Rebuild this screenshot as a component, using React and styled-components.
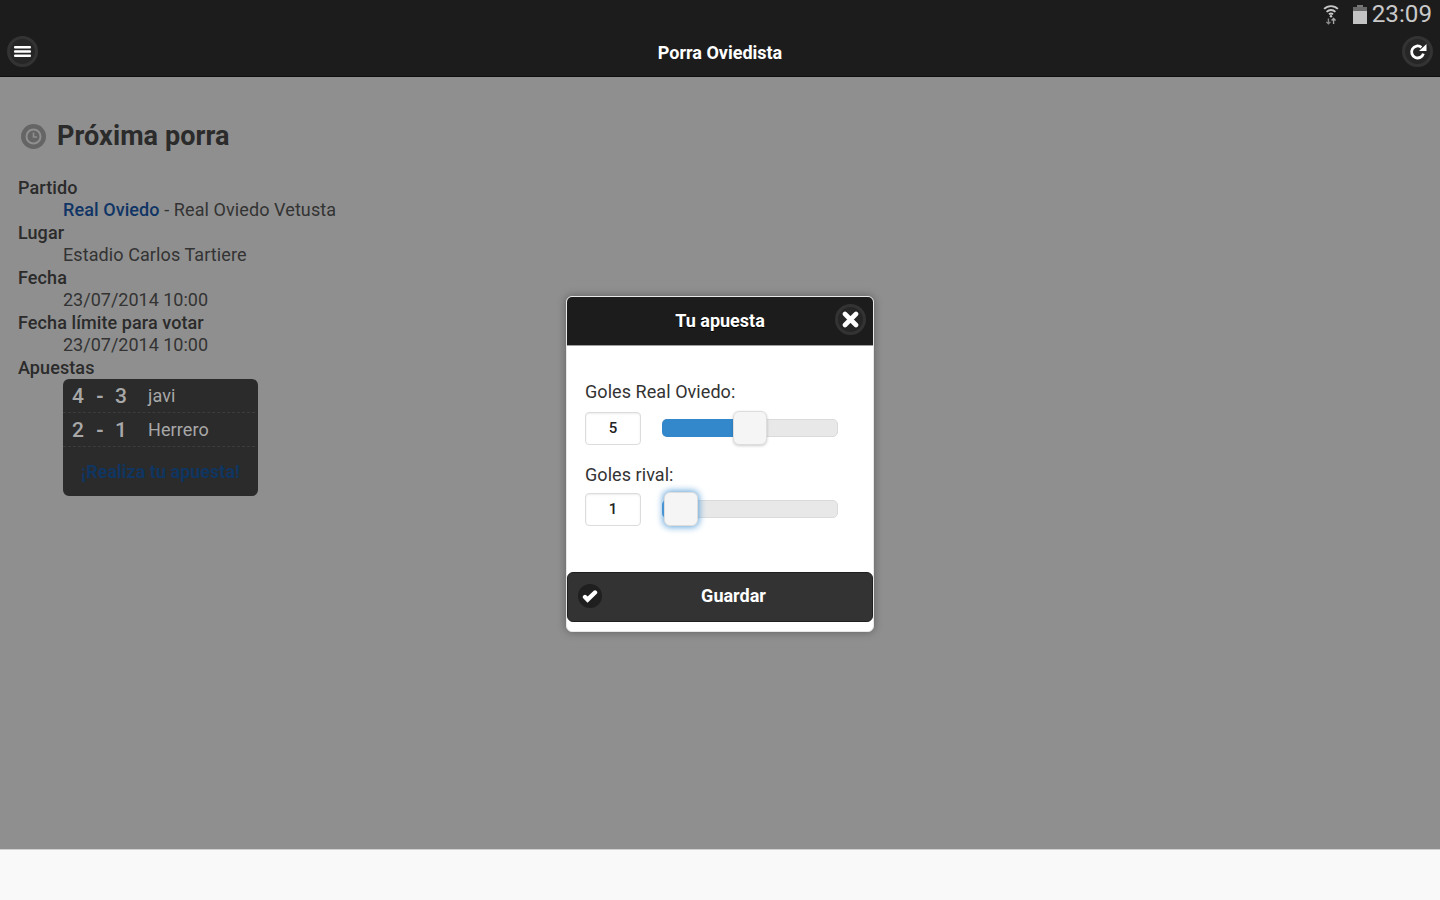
import React from 'react';
import styled, { createGlobalStyle } from 'styled-components';

const GlobalStyle = createGlobalStyle`
    html, body {
        margin: 0;
        padding: 0;
        height: 100%;
        overflow: hidden;
        background: #f9f9f9;
        font-family: Roboto, "Liberation Sans", sans-serif;
    }
`;

const Page = styled.div`
    position: relative;
    width: 1440px;
    height: 900px;
    display: flex;
    flex-direction: column;
`;

const Header = styled.header`
    height: 77px;
    box-sizing: border-box;
    background: #1c1c1c;
    border-bottom: 1px solid #0e0e0e;
    display: flex;
    flex-direction: column;
`;

const StatusBar = styled.div`
    height: 28px;
    flex: none;
    display: flex;
    align-items: center;
    justify-content: flex-end;
    padding-right: 8px;
    color: #c9c9c9;
    font-size: 24.2px;
    line-height: 28px;
`;

const WifiSlot = styled.span`
    display: flex;
    margin-right: 13px;
`;

const BatterySlot = styled.span`
    display: flex;
    margin-right: 5px;
`;

const Toolbar = styled.div`
    flex: 1;
    display: flex;
    align-items: flex-start;
    justify-content: space-between;
    padding: 8px 7px 0;
`;

const ToolbarTitle = styled.h1`
    margin: 1px 0 0;
    font-size: 18px;
    line-height: 32px;
    font-weight: 700;
    color: #fff;
`;

const RoundButton = styled.div`
    width: 31px;
    height: 31px;
    box-sizing: border-box;
    border-radius: 50%;
    border: 3px solid #333;
    background: #262626;
    display: flex;
    align-items: center;
    justify-content: center;
`;

const Content = styled.main`
    flex: 1;
    background: #8f8f8f;
    padding: 42px 18px 0;
    color: #333;
`;

const PageTitle = styled.h2`
    display: flex;
    align-items: center;
    gap: 11px;
    margin: 0 0 23.5px;
    padding-left: 3px;
    height: 34px;
    font-size: 27px;
    font-weight: 700;
    letter-spacing: 0.08px;
    color: #2b2b2b;
`;

const ClockBadge = styled.span`
    width: 25px;
    height: 25px;
    margin-top: 1px;
    border-radius: 50%;
    background: #656565;
    display: flex;
    align-items: center;
    justify-content: center;
`;

const Details = styled.dl`
    margin: 0;
    font-size: 18px;
    line-height: 22.5px;
`;

const Term = styled.dt`
    font-weight: 500;
    letter-spacing: 0.09px;
    color: #2b2b2b;
`;

const Value = styled.dd`
    margin: 0 0 0 45px;
    letter-spacing: ${props => (props.$numeric ? 0 : 0.09)}px;
    color: #333;
`;

const Team = styled.span`
    font-weight: 500;
    color: #0f3566;
`;

const BetsCard = styled.div`
    width: 195px;
    height: 117px;
    margin-left: 45px;
    box-sizing: border-box;
    background: #2b2b2b;
    border-radius: 6px;
    display: flex;
    flex-direction: column;
`;

const BetRow = styled.div`
    height: 34px;
    flex: none;
    box-sizing: border-box;
    margin-right: 3px;
    border-bottom: 1px dashed #3c3c3c;
    display: grid;
    grid-template-columns: 24px 19px 33px 1fr;
    align-items: center;
    padding-left: 9px;
    color: #a8a8a8;
`;

const Score = styled.span`
    font-size: 21px;
    font-weight: 500;
`;

const Dash = styled.span`
    font-size: 20px;
    font-weight: 700;
`;

const BetName = styled.span`
    font-size: 18px;
    letter-spacing: 0.09px;
`;

const BetLink = styled.a`
    flex: 1;
    display: flex;
    align-items: center;
    justify-content: center;
    font-size: 18px;
    font-weight: 700;
    color: #0f3560;
`;

const Footer = styled.footer`
    height: 51px;
    box-sizing: border-box;
    background: #f9f9f9;
    border-top: 1px solid #d0d0d0;
`;

const Popup = styled.section`
    position: absolute;
    top: 296px;
    left: 50%;
    margin-left: -154px;
    width: 308px;
    height: 336px;
    box-sizing: border-box;
    display: flex;
    flex-direction: column;
    background: #fff;
    border: 1px solid #e8e8e8;
    border-radius: 6px;
    box-shadow: 0 0 8px rgba(0, 0, 0, 0.35);
    overflow: hidden;
`;

const PopupHeader = styled.div`
    height: 49px;
    flex: none;
    box-sizing: border-box;
    padding-bottom: 2px;
    background: #1c1c1c;
    border-bottom: 1px solid #a0a0a0;
    display: flex;
    align-items: center;
    justify-content: center;
    position: relative;
`;

const PopupTitle = styled.h3`
    margin: 0;
    font-size: 18px;
    font-weight: 700;
    color: #fff;
    text-shadow: 0 1px 0 #000;
`;

const CloseSlot = styled.div`
    position: absolute;
    right: 7px;
    top: 7px;
`;

const PopupBody = styled.div`
    flex: 1;
    padding: 35px 18px 0;
    display: flex;
    flex-direction: column;
`;

const FieldLabel = styled.label`
    display: block;
    font-size: 18px;
    line-height: 22px;
    letter-spacing: 0.06px;
    color: #333;
    margin-bottom: ${props => props.$gap}px;
`;

const Field = styled.div`
    margin-bottom: ${props => props.$gap}px;
`;

const FieldRow = styled.div`
    display: flex;
    align-items: center;
    gap: 21px;
    height: 34px;
`;

const ValueBox = styled.div`
    width: 56px;
    height: 33px;
    box-sizing: border-box;
    border: 1px solid #dcdcdc;
    border-radius: 4px;
    box-shadow: inset 0 1px 2px rgba(0, 0, 0, 0.08);
    display: flex;
    align-items: center;
    justify-content: center;
    font-size: 15px;
    font-weight: 500;
    color: #222;
`;

const Track = styled.div`
    position: relative;
    width: 176px;
    height: 18px;
    box-sizing: border-box;
    background: #e8e8e8;
    border: 1px solid #dadada;
    border-radius: 5px;
`;

const TrackFill = styled.div`
    margin: -1px;
    height: 18px;
    background: #3388cc;
    border-radius: 5px 0 0 5px;
`;

const Thumb = styled.div`
    position: absolute;
    top: -9px;
    width: 34px;
    height: 34px;
    box-sizing: border-box;
    margin-left: -1px;
    background: #f5f5f5;
    border: 1px solid #dddddd;
    border-radius: 6px;
    box-shadow: ${props => (props.$focused
        ? '0 0 7px 1px #5a9fd8'
        : '0 1px 3px rgba(0, 0, 0, 0.2)')};
`;

const SaveButton = styled.button`
    position: relative;
    flex: none;
    height: 50px;
    margin: 0 0 9px;
    width: 306px;
    border: 1px solid #1f1f1f;
    border-radius: 6px;
    background: #333;
    color: #fff;
    font-family: inherit;
    font-size: 18px;
    font-weight: 700;
    padding: 0 0 4px 27px;
    text-align: center;
`;

const CheckBadge = styled.span`
    position: absolute;
    left: 10px;
    top: 11px;
    width: 24px;
    height: 24px;
    border-radius: 50%;
    background: #1f1f1f;
    display: flex;
    align-items: center;
    justify-content: center;
`;

const WifiIcon = () => (
    <svg width="18" height="22" viewBox="0 0 18 24" fill="none" stroke="#c8c8c8">
        <path d="M1.5 6.5a10.5 10.5 0 0 1 15 0" strokeWidth="2" />
        <path d="M4.2 9.6a6.8 6.8 0 0 1 9.6 0" strokeWidth="2" />
        <path d="M6.8 12.5a3.2 3.2 0 0 1 4.4 0" strokeWidth="2" />
        <circle cx="9" cy="14.4" r="1.3" fill="#c8c8c8" stroke="none" />
        <path d="M6.2 17v6M4 20.6l2.2 2.2 2.2-2.2" stroke="#8a8a8a" strokeWidth="1.5" />
        <path d="M11.8 23v-6M9.6 19.2l2.2-2.2 2.2 2.2" stroke="#a5a5a5" strokeWidth="1.5" />
    </svg>
);

const BatteryIcon = () => (
    <svg width="14" height="19" viewBox="0 0 14 19">
        <path d="M4 0h6v2H4z" fill="#777" />
        <path d="M0 2h14v4H0z" fill="#6a6a6a" />
        <path d="M0 6h14v13H0z" fill="#c4c4c4" />
    </svg>
);

const MenuIcon = () => (
    <svg width="17" height="11" viewBox="0 0 17 11" fill="#fff">
        <rect y="0" width="17" height="2.6" rx="1" />
        <rect y="4.2" width="17" height="2.6" rx="1" />
        <rect y="8.4" width="17" height="2.6" rx="1" />
    </svg>
);

const RefreshIcon = () => (
    <svg width="18" height="18" viewBox="0 0 18 18" fill="none">
        <path d="M14.4 10.6A6 6 0 1 1 12.4 4.3" stroke="#fff" strokeWidth="2.8" />
        <path d="M10 8h7.5V1z" fill="#fff" />
    </svg>
);

const CloseIcon = () => (
    <svg width="17" height="17" viewBox="0 0 17 17" stroke="#fff" strokeWidth="4.6" strokeLinecap="round">
        <path d="M3 3l11 11M14 3L3 14" />
    </svg>
);

const CheckIcon = () => (
    <svg width="16" height="14" viewBox="0 0 16 14" fill="none" stroke="#fff" strokeWidth="4.4" strokeLinecap="round">
        <path d="M3 8l2.6 2.6L13 3.5" />
    </svg>
);

const ClockIcon = () => (
    <svg width="17" height="17" viewBox="0 0 17 17" fill="none" stroke="#8f8f8f" strokeWidth="2">
        <circle cx="8.5" cy="8.5" r="7" />
        <path d="M8.5 4.5v4.5h3.5" strokeWidth="1.6" />
    </svg>
);

const bets = [
    { home: 4, away: 3, name: 'javi' },
    { home: 2, away: 1, name: 'Herrero' },
];

const Slider = ({ percent, thumbLeft, focused }) => (
    <Track>
        <TrackFill style={{ width: `${percent}%` }} />
        <Thumb $focused={focused} style={{ left: thumbLeft }} />
    </Track>
);

const App = () => (
    <Page>
        <GlobalStyle />
        <Header>
            <StatusBar>
                <WifiSlot><WifiIcon /></WifiSlot>
                <BatterySlot><BatteryIcon /></BatterySlot>
                <span>23:09</span>
            </StatusBar>
            <Toolbar>
                <RoundButton><MenuIcon /></RoundButton>
                <ToolbarTitle>Porra Oviedista</ToolbarTitle>
                <RoundButton><RefreshIcon /></RoundButton>
            </Toolbar>
        </Header>

        <Content>
            <PageTitle>
                <ClockBadge><ClockIcon /></ClockBadge>
                Próxima porra
            </PageTitle>
            <Details>
                <Term>Partido</Term>
                <Value><Team>Real Oviedo</Team> - Real Oviedo Vetusta</Value>
                <Term>Lugar</Term>
                <Value>Estadio Carlos Tartiere</Value>
                <Term>Fecha</Term>
                <Value $numeric>23/07/2014 10:00</Value>
                <Term>Fecha límite para votar</Term>
                <Value $numeric>23/07/2014 10:00</Value>
                <Term>Apuestas</Term>
            </Details>
            <BetsCard>
                {bets.map(bet => (
                    <BetRow key={bet.name}>
                        <Score>{bet.home}</Score>
                        <Dash>-</Dash>
                        <Score>{bet.away}</Score>
                        <BetName>{bet.name}</BetName>
                    </BetRow>
                ))}
                <BetLink>¡Realiza tu apuesta!</BetLink>
            </BetsCard>
        </Content>

        <Footer />

        <Popup>
            <PopupHeader>
                <PopupTitle>Tu apuesta</PopupTitle>
                <CloseSlot>
                    <RoundButton><CloseIcon /></RoundButton>
                </CloseSlot>
            </PopupHeader>
            <PopupBody>
                <Field $gap={19}>
                    <FieldLabel $gap={8}>Goles Real Oviedo:</FieldLabel>
                    <FieldRow>
                        <ValueBox>5</ValueBox>
                        <Slider percent={41} thumbLeft={71} />
                    </FieldRow>
                </Field>
                <Field $gap={0}>
                    <FieldLabel $gap={6}>Goles rival:</FieldLabel>
                    <FieldRow>
                        <ValueBox>1</ValueBox>
                        <Slider percent={3} thumbLeft={2} focused />
                    </FieldRow>
                </Field>
            </PopupBody>
            <SaveButton>
                <CheckBadge><CheckIcon /></CheckBadge>
                Guardar
            </SaveButton>
        </Popup>
    </Page>
);

export default App;
